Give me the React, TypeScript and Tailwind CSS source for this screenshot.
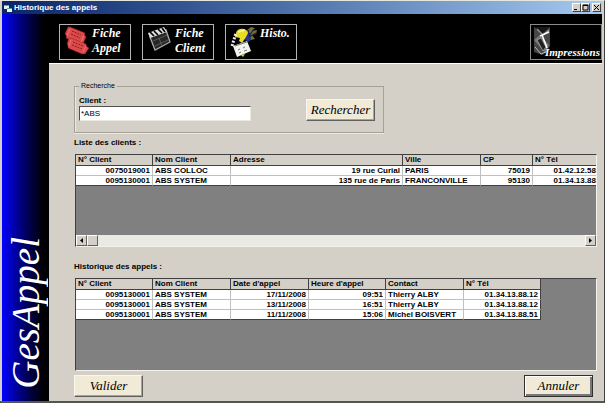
import React from 'react';

type Column = { label: string; width: string; right?: boolean };

const CLIENT_COLUMNS: Column[] = [
  { label: 'N° Client', width: 'w-[77px]', right: true },
  { label: 'Nom Client', width: 'w-[78px]' },
  { label: 'Adresse', width: 'w-[172px]', right: true },
  { label: 'Ville', width: 'w-[78px]' },
  { label: 'CP', width: 'w-[52px]', right: true },
  { label: 'N° Tél', width: 'w-[77px]', right: true },
];

const CLIENTS = [
  ['0075019001', 'ABS COLLOC', '19 rue Curial', 'PARIS', '75019', '01.42.12.58.10'],
  ['0095130001', 'ABS SYSTEM', '135 rue de Paris', 'FRANCONVILLE', '95130', '01.34.13.88.12'],
];

const CALL_COLUMNS: Column[] = [
  { label: 'N° Client', width: 'w-[77px]', right: true },
  { label: 'Nom Client', width: 'w-[78px]' },
  { label: "Date d'appel", width: 'w-[78px]', right: true },
  { label: "Heure d'appel", width: 'w-[77px]', right: true },
  { label: 'Contact', width: 'w-[78px]' },
  { label: 'N° Tél', width: 'w-[77px]', right: true },
];

const CALLS = [
  ['0095130001', 'ABS SYSTEM', '17/11/2008', '09:51', 'Thierry ALBY', '01.34.13.88.12'],
  ['0095130001', 'ABS SYSTEM', '13/11/2008', '16:51', 'Thierry ALBY', '01.34.13.88.12'],
  ['0095130001', 'ABS SYSTEM', '11/11/2008', '15:06', 'Michel BOISVERT', '01.34.13.88.51'],
];

const SCRIPT = "font-['Monotype_Corsiva','Liberation_Serif',serif] italic";

const TicketsIcon = () => (
  <svg viewBox="0 0 26 28" className="w-[26px] h-7 shrink-0">
    <g fill="#dc4a4c" stroke="#8e1e22" strokeWidth="0.5">
      <path d="M6 1l15 6c-1 2 0 3 1 4l-3 7-3 0-14-6c1-2 0-3-1-4l3-7z" />
      <path d="M7 12l15 6c0 2 1 3 3 4l-4 6h-3L4 22c0-2 0-3-1-4l2-6z" />
    </g>
    <g stroke="#7c1a1e" strokeWidth="0.9" fill="none">
      <path d="M8 5l9 4M7 8l9 4M9 16l10 4M8 19l10 4" strokeDasharray="2 1" />
      <path d="M6 3l-3 7M20 9l-3 7M7 14l-2 6M22 20l-3 6" stroke="#ff8585" strokeWidth="0.6" />
    </g>
  </svg>
);

const ClapIcon = () => (
  <svg viewBox="0 0 26 28" className="w-[26px] h-7 shrink-0">
    <path d="M3 11L19 4l4 12-15 8z" fill="#262626" stroke="#a8a8a8" strokeWidth="1.3" />
    <path d="M1 7L17 1l3 5L3 12z" fill="#dedede" />
    <path d="M3 6l4 4M7 5l4 4M11 3l4 4M15 2l3 4" stroke="#000" strokeWidth="1.7" />
    <path d="M6 15l14-6M8 20l13-6M12 12l3 8" stroke="#666" strokeWidth="0.8" />
  </svg>
);

const HistoIcon = () => (
  <svg viewBox="0 0 28 32" className="w-7 h-8 shrink-0">
    <path d="M16 5l5-4 4 1-3 3 5-1-1 4-4 1 3 4-4 1-5-3z" fill="#77702a" />
    <path d="M15 7l5 0 1 7-3 2-4-3z" fill="#25348d" />
    <path d="M18 4l2 7M24 3l-5 7M26 7l-7 4" stroke="#17205e" strokeWidth="1.2" />
    <path d="M6 7c1-5 10-6 12 0l-2 4-4 6-3-2 1-3-5-1z" fill="#e8dc28" />
    <path d="M8 6l7-2" stroke="#fff68c" strokeWidth="1.4" />
    <path d="M2 20L6 7" stroke="#ececec" strokeWidth="3" strokeDasharray="2 1.5" />
    <path d="M3 20l14-5 4 10-14 6z" fill="#f2f2ee" />
    <path d="M5 20l12-4M8 24l2-1M13 22l2-1M9 27l2-1M14 25l3-1" stroke="#777" />
    <path d="M11 29l2 2 2-3z" fill="#ded43a" />
  </svg>
);

const PrintIcon = () => (
  <svg viewBox="0 0 18 30" className="w-[18px] h-[30px] shrink-0">
    <path d="M1 1h16v19l-4 7-4 2-8-3z" fill="#454545" />
    <path d="M1 1l8 7 8-7z" fill="#171717" />
    <path d="M1 14l6-5 9 10-4 8z" fill="#777" />
    <path d="M4 14l4-2 5 9-3 4z" fill="#222" stroke="#aaa" strokeWidth="0.7" />
    <path d="M4 3l6 6M9 10l7-6" stroke="#999" strokeWidth="1.3" />
    <path d="M7 10l9-4M9 9l5 13" stroke="#fff" strokeWidth="1.6" />
    <path d="M2 21l6 7 7-3" stroke="#bbb" fill="none" />
  </svg>
);

const AppIcon = () => (
  <svg viewBox="0 0 8 8" className="w-2 h-2 shrink-0">
    <path d="M0 1h5v4H0z" fill="#e8f4f0" />
    <path d="M0 1h5v1H0z" fill="#39b8a5" />
    <path d="M3 4h5v4H3z" fill="#f4f4e4" />
    <path d="M3 4h5v1H3z" fill="#46a890" />
  </svg>
);

const CaptionButton = ({ label, path }: { label: string; path: string }) => (
  <button aria-label={label} className="w-[9px] h-[9px] bg-[#d4d0c8] border border-t-white border-l-white border-r-[#404040] border-b-[#404040]">
    <svg viewBox="0 0 7 7" className="w-[7px] h-[7px]">
      <path d={path} stroke="#000" fill="none" />
    </svg>
  </button>
);

const MenuButton = ({ icon, children }: { icon: React.ReactNode; children: React.ReactNode }) => (
  <button className={`${SCRIPT} flex w-[72px] h-9 pl-1 pt-px border border-[#b4b4b4] text-white text-[12px] leading-[15px] font-bold text-left`}>
    {icon}
    <span className="pl-[2px]">{children}</span>
  </button>
);

const CommandButton = ({ children, focused }: { children: React.ReactNode; focused?: boolean }) => (
  <button
    className={`${SCRIPT} w-[69px] h-[22px] bg-[#f0ead6] border text-black text-[13px] leading-[14px] text-center ${
      focused
        ? 'border-[#303030] shadow-[inset_1px_1px_0_#fff,inset_-2px_-2px_0_#777]'
        : 'border-t-[#f8f6ee] border-l-[#f8f6ee] border-r-[#606060] border-b-[#606060] shadow-[inset_-1px_-1px_0_#a8a498]'
    }`}
  >
    {children}
  </button>
);

const Grid = ({ columns, rows, label }: { columns: Column[]; rows: string[][]; label: string }) => (
  <table aria-label={label} className="table-fixed w-0 border-separate border-spacing-0 text-[8px] font-bold whitespace-nowrap">
    <thead>
      <tr>
        {columns.map((c) => (
          <th key={c.label} className={`${c.width} bg-[#d4d0c8] border-r border-b border-[#404040] pl-[2px] text-left leading-[10px] overflow-hidden`}>
            {c.label}
          </th>
        ))}
      </tr>
    </thead>
    <tbody>
      {rows.map((row, i) => (
        <tr key={i} className="group">
          {row.map((cell, j) => (
            <td
              key={j}
              className={`bg-white border-r border-b border-[#c0c0c0] group-last:border-b-[#404040] last:border-r-[#404040] px-[2px] leading-[9px] overflow-hidden ${
                columns[j].right ? 'text-right' : 'text-left'
              }`}
            >
              {cell}
            </td>
          ))}
        </tr>
      ))}
    </tbody>
  </table>
);

const App: React.FC = () => {
  return (
    <div className="min-h-screen flex flex-col bg-[#d4d0c8] border-t border-t-[#e8e5dd] border-r border-r-[#404040] border-b-2 border-b-[#555] pl-[2px] pr-[2px] font-['Liberation_Sans',Arial,sans-serif] text-black">
      {/* Barre de titre */}
      <header className="flex items-center h-[13px] pl-[2px] pr-px bg-linear-to-r from-[#0a246a] to-[#a6caf0]">
        <AppIcon />
        <h1 className="flex-1 pl-[2px] text-white text-[8px] leading-[12px] font-bold">Historique des appels</h1>
        <CaptionButton label="Réduire" path="M1 5.5h3" />
        <CaptionButton label="Agrandir" path="M1 1h5v5H1zM1 1.5h5" />
        <span className="w-[2px]" />
        <CaptionButton label="Fermer" path="M1 1l5 5M6 1L1 6" />
      </header>

      <div className="flex flex-1">
        {/* Bandeau vertical */}
        <aside className="flex items-end justify-center w-[47px] shrink-0 pb-3 bg-linear-to-r from-[#0000ff] to-black">
          <span className={`${SCRIPT} [writing-mode:vertical-rl] rotate-180 text-white text-[39px] leading-[44px]`}>GesAppel</span>
        </aside>

        <div className="flex flex-col flex-1 min-w-0">
          <nav className="flex h-[50px] pl-[10px] pt-[10px] gap-[11px] bg-black border-b border-b-white">
            <MenuButton icon={<TicketsIcon />}>
              Fiche
              <br />
              Appel
            </MenuButton>
            <MenuButton icon={<ClapIcon />}>
              Fiche
              <br />
              Client
            </MenuButton>
            <MenuButton icon={<HistoIcon />}>Histo.</MenuButton>
            <button className={`${SCRIPT} relative flex items-start ml-auto w-[72px] h-9 pl-[2px] pt-px border border-[#8c8c8c] text-white text-[11px] leading-[14px] font-bold`}>
              <PrintIcon />
              <span className="absolute right-px bottom-0">Impressions</span>
            </button>
          </nav>

          <main className="flex flex-col flex-1 pl-[25px] pr-[5px] pt-[17px] pb-1">
            {/* Critères de recherche */}
            <fieldset className="w-[310px] border border-[#a5a198] px-1 pb-[11px] shadow-[inset_1px_0_0_#ece9e2,0_1px_0_#ece9e2]">
              <legend className="px-[2px] text-[7px] leading-[10px]">Recherche</legend>
              <div className="flex items-center justify-between pr-1">
                <div className="flex flex-col pt-[5px]">
                  <label htmlFor="client" className="text-[8px] leading-[10px] font-bold">
                    Client :
                  </label>
                  <input
                    id="client"
                    defaultValue="*ABS"
                    className="w-[172px] h-[15px] px-px bg-white border border-t-[#505050] border-l-[#505050] border-r-[#ece9e2] border-b-[#ece9e2] text-[8px] leading-[12px] outline-none"
                  />
                </div>
                <div className="pt-[5px]">
                  <CommandButton>Rechercher</CommandButton>
                </div>
              </div>
            </fieldset>

            {/* Liste des clients */}
            <h2 className="pt-[5px] pb-[6px] text-[8px] leading-[10px] font-bold">Liste des clients :</h2>
            <section className="flex flex-col flex-1 ml-px bg-[#808080] border border-t-[#404040] border-l-[#404040] border-r-[#f4f2ec] border-b-[#f4f2ec] overflow-hidden">
              <div className="flex-1 overflow-hidden">
                <Grid label="Liste des clients" columns={CLIENT_COLUMNS} rows={CLIENTS} />
              </div>
              <div className="flex justify-between h-[11px] bg-[#ebe9e4]">
                <div className="flex">
                  <button aria-label="Défiler à gauche" className="flex items-center justify-center w-[11px] bg-[#d4d0c8] border border-t-white border-l-white border-r-[#606060] border-b-[#606060]">
                    <svg viewBox="0 0 5 5" className="w-[5px] h-[5px]">
                      <path d="M4 0v5L1 2.5z" />
                    </svg>
                  </button>
                  <div className="w-[11px] bg-[#d4d0c8] border border-t-white border-l-white border-r-[#606060] border-b-[#606060]" />
                </div>
                <button aria-label="Défiler à droite" className="flex items-center justify-center w-[11px] bg-[#d4d0c8] border border-t-white border-l-white border-r-[#606060] border-b-[#606060]">
                  <svg viewBox="0 0 5 5" className="w-[5px] h-[5px]">
                    <path d="M1 0v5l3-2.5z" />
                  </svg>
                </button>
              </div>
            </section>

            {/* Historique */}
            <h2 className="pt-[15px] pb-[6px] text-[8px] leading-[10px] font-bold">Historique des appels :</h2>
            <section className="flex-1 ml-px bg-[#808080] border border-t-[#404040] border-l-[#404040] border-r-[#f4f2ec] border-b-[#f4f2ec] overflow-hidden">
              <Grid label="Historique des appels" columns={CALL_COLUMNS} rows={CALLS} />
            </section>

            <div className="flex justify-between pt-1 pr-1">
              <CommandButton>Valider</CommandButton>
              <CommandButton focused>Annuler</CommandButton>
            </div>
          </main>
        </div>
      </div>
    </div>
  );
};

export default App;
